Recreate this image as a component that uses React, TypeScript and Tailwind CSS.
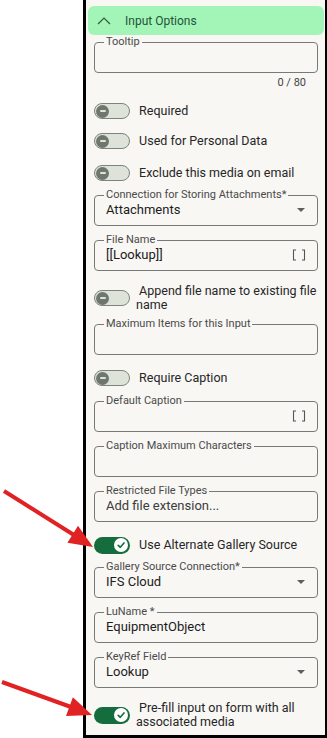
import React from 'react';

const Toggle: React.FC<{ on?: boolean }> = ({ on }) =>
  on ? (
    <div className="w-[36px] h-[17px] shrink-0 rounded-full bg-[#156d3d] flex items-center justify-end pr-[2px]">
      <div className="w-[14px] h-[14px] rounded-full bg-white flex items-center justify-center">
        <svg width="10" height="10" viewBox="0 0 10 10">
          <path d="M2.2 5.3 L4.3 7.3 L8 2.9" fill="none" stroke="#156d3d" strokeWidth="1.6" strokeLinecap="round" strokeLinejoin="round" />
        </svg>
      </div>
    </div>
  ) : (
    <div className="w-[36px] h-[16px] shrink-0 rounded-full bg-[#dde3d9] border border-[#7d847b] flex items-center pl-[1px]">
      <div className="w-[13px] h-[13px] rounded-full bg-[#6f766e] flex items-center justify-center">
        <div className="w-[6px] h-[2px] bg-[#dfe3dc] rounded-full" />
      </div>
    </div>
  );

const ToggleRow: React.FC<{ on?: boolean; children: React.ReactNode; className?: string }> = ({ on, children, className }) => (
  <div className={`flex items-center min-h-[24px] ${className ?? ''}`}>
    <Toggle on={on} />
    <span className="ml-[6px] text-[12.5px] leading-[14px] text-[#262626]">{children}</span>
  </div>
);

const Caret = () => (
  <svg width="8" height="4" viewBox="0 0 8 4">
    <path d="M0 0 H8 L4 4 Z" fill="#5e5e5e" />
  </svg>
);

const Brackets = () => (
  <svg width="14" height="12" viewBox="0 0 14 12">
    <path d="M4 1 H1.5 V11 H4 M10 1 H12.5 V11 H10" fill="none" stroke="#555" strokeWidth="1.1" />
  </svg>
);

type FieldProps = {
  label: string;
  value?: string;
  placeholder?: string;
  select?: boolean;
  expand?: boolean;
  className?: string;
};

const Field: React.FC<FieldProps> = ({ label, value, placeholder, select, expand, className }) => (
  <fieldset className={`min-w-0 border border-[#777a76] rounded-[4px] pl-[9px] pr-[11px] pb-[7px] ${className ?? ''}`}>
    <legend className="px-[2px] text-[11px] leading-[14px] text-[#4a4a4a] whitespace-nowrap">{label}</legend>
    <div className="h-[16px] flex items-center justify-between pl-[2px]">
      <span className={`text-[13px] leading-[16px] ${placeholder ? 'text-[#3c3c3c]' : 'text-[#1c1c1c]'}`}>
        {value ?? placeholder ?? ''}
      </span>
      {select && (
        <span className="mr-[1px]">
          <Caret />
        </span>
      )}
      {expand && <Brackets />}
    </div>
  </fieldset>
);

export default function App() {
  return (
    <div className="relative w-[327px] h-[738px] bg-white overflow-hidden" style={{ fontFamily: 'Roboto, "Noto Sans", sans-serif' }}>
      <div className="ml-[83px] w-[244px] h-[738px] border-l-[3px] border-r-2 border-b-[3px] border-black bg-[#f8f7f4] flex flex-col">
        {/* header */}
        <div className="mt-[6px] ml-[2px] mr-[1px] h-[29px] rounded-[6px] bg-[#a2f5b6] flex items-center pl-[9px]">
          <svg width="14" height="8" viewBox="0 0 14 8">
            <path d="M1 7 L7 1 L13 7" fill="none" stroke="#2f5b3e" strokeWidth="1.2" />
          </svg>
          <span className="ml-[14px] text-[12px] text-[#24543a]">Input Options</span>
        </div>

        <div className="pl-[8px] pr-[7px] flex flex-col">
          <Field label="Tooltip" />
          <div className="mt-[3px] h-[14px] leading-[14px] text-right pr-[12px] text-[11px] text-[#444]">0 / 80</div>

          <ToggleRow className="mt-[9px]">{'\u00a0'}Required</ToggleRow>
          <ToggleRow className="mt-[6px]">{'\u00a0'}Used for Personal Data</ToggleRow>
          <ToggleRow className="mt-[8px]">{'\u00a0'}Exclude this media on email</ToggleRow>

          <Field className="mt-[3px]" label="Connection for Storing Attachments*" value="Attachments" select />
          <Field className="mt-[7px]" label="File Name" value="[[Lookup]]" expand />

          <ToggleRow className="mt-[13px]">
            {'\u00a0'}Append file name to existing file
            <br />
            name
          </ToggleRow>

          <Field className="mt-[5px]" label="Maximum Items for this Input" />
          <ToggleRow className="mt-[11px]">{'\u00a0'}Require Caption</ToggleRow>

          <Field className="mt-[4px]" label="Default Caption" expand />
          <Field className="mt-[7px]" label="Caption Maximum Characters" />
          <Field className="mt-[7px]" label="Restricted File Types" placeholder="Add file extension..." />

          <ToggleRow on className="mt-[11px]">{'\u00a0'}Use Alternate Gallery Source</ToggleRow>

          <Field className="mt-[3px]" label="Gallery Source Connection*" value="IFS Cloud" select />
          <Field className="mt-[7px]" label="LuName *" value="EquipmentObject" />
          <Field className="mt-[7px]" label="KeyRef Field" value="Lookup" select />

          <ToggleRow on className="mt-[13px]">
            {'\u00a0'}Pre-fill input on form with all
            <br />
            associated media
          </ToggleRow>
        </div>
      </div>

      {/* annotation arrows */}
      <svg className="absolute left-0 top-0 pointer-events-none" width="100" height="738" viewBox="0 0 100 738">
        <line x1="4" y1="491" x2="74" y2="535" stroke="#e02222" strokeWidth="4" />
        <polygon points="93,547 67.4,542.7 78,525.7" fill="#e02222" />
        <line x1="2" y1="682" x2="71" y2="707" stroke="#e02222" strokeWidth="4" />
        <polygon points="92,715 66,716.1 72.9,697.3" fill="#e02222" />
      </svg>
    </div>
  );
}
